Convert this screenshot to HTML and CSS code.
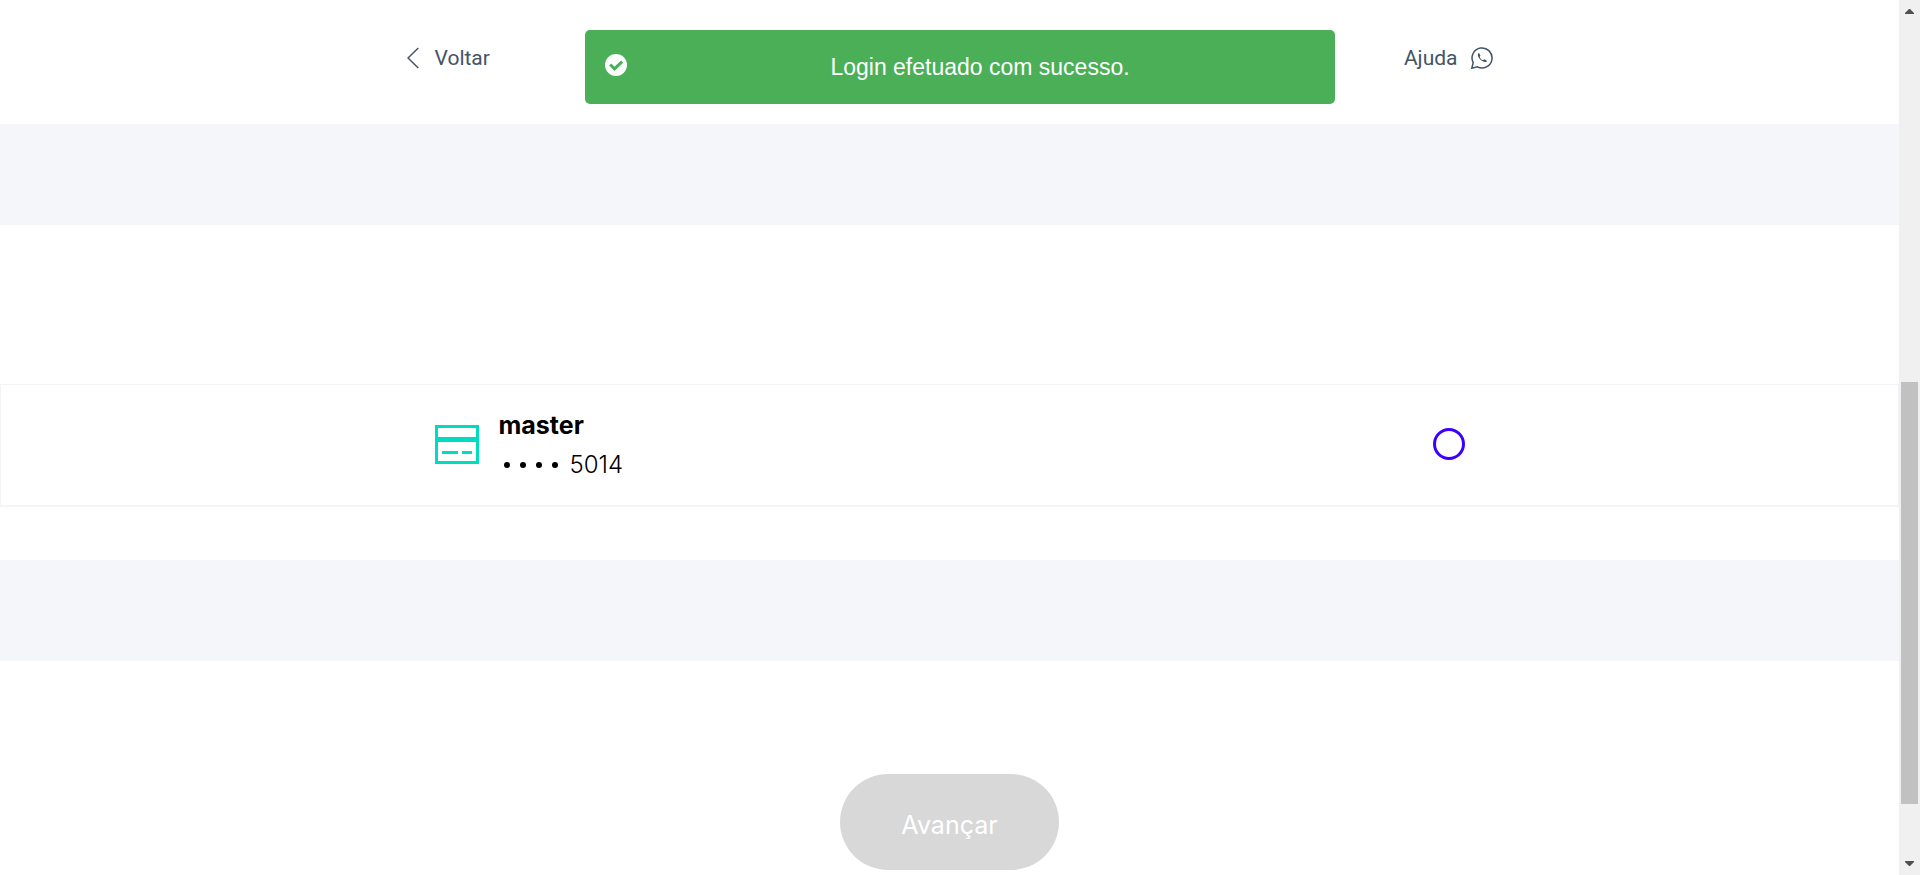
FILE: index.html
```html
<!DOCTYPE html>
<html lang="pt-BR">
<head>
<meta charset="utf-8">
<meta name="viewport" content="width=device-width, initial-scale=1">
<title>Pagamento</title>
<link rel="stylesheet" href="styles.css">
</head>
<body>
<div class="page">
  <header class="header">
    <div class="header-inner">
      <a class="nav-link nav-back" href="#">
        <svg class="icon-back" viewBox="0 0 12 22" aria-hidden="true"><path d="M11.3 1 1 11l10.3 10"/></svg>
        <span>Voltar</span>
      </a>
      <a class="nav-link nav-help" href="#">
        <span>Ajuda</span>
        <svg class="icon-help" viewBox="0 0 22 22" aria-hidden="true">
          <path class="bubble" d="M.8 21.200 2.200 15.600A10 10 0 1 1 6.400 19.800Z"/>
          <path class="phone" d="M7.300 6.300C6 8 7.400 10.600 9.300 12.500c2 2 4.500 3.200 6.300 2.200l.3-1-2.500-1.400-1.500.9C10.500 12.600 9.300 11.400 8.700 10l.7-1.400L8.200 6.300Z"/>
        </svg>
      </a>
    </div>
  </header>
  <main class="main">
    <div class="band"></div>
    <form class="form">
      <label class="card">
        <span class="card-inner">
          <svg class="icon-card" viewBox="0 0 44 39" aria-hidden="true">
            <path class="frame" d="M1.500 1.500h41v36h-41z"/>
            <path class="fill" d="M2 12h40v5H2zM7 26h16v3H7zM27 26h10v3H27z"/>
          </svg>
          <span class="card-text">
            <strong class="card-brand">master</strong>
            <span class="card-number"><span class="dots" aria-hidden="true"><i></i><i></i><i></i><i></i></span>5014</span>
          </span>
          <input class="radio" type="radio" name="card" value="5014">
        </span>
      </label>
      <div class="band"></div>
      <button class="submit" type="button" disabled>Avançar</button>
    </form>
  </main>
</div>
<div class="scrollbar" aria-hidden="true">
  <svg class="arrow" viewBox="0 0 9 5"><path d="M0 5V4L4 0h1l4 4v1z"/></svg>
  <div class="track"><div class="thumb"></div></div>
  <svg class="arrow" viewBox="0 0 9 5"><path d="M0 0v1l4 4h1l4-4V0z"/></svg>
</div>
<div class="toast" role="status">
  <svg class="icon-check" viewBox="0 0 22 22" aria-hidden="true"><circle cx="11" cy="11" r="11"/><path d="m5.200 10.500 4.300 4.300 7.600-7.200"/></svg>
  <span class="toast-text">Login efetuado com sucesso.</span>
</div>
</body>
</html>
```
FILE: styles.css
```css
* {
  box-sizing: border-box;
}

body {
  margin: 0;
  display: flex;
  height: 100vh;
  overflow: hidden;
  background: #fff;
  color: #000;
  font-family: Inter, "Liberation Sans", sans-serif;
  font-size: 24px;
}

.page {
  flex: 1;
  min-width: 0;
}

.header {
  padding: 40px 24px 48px;
}

.header-inner {
  display: flex;
  justify-content: space-between;
  max-width: 1086px;
  margin: 0 auto;
}

.nav-link {
  display: flex;
  align-items: center;
  color: #425466;
  font-family: Roboto, sans-serif;
  font-size: 21px;
  line-height: 36px;
  text-decoration: none;
}

.nav-back {
  gap: 16px;
}

.nav-help {
  gap: 13px;
}

.icon-back {
  width: 12px;
  height: 22px;
  fill: none;
  stroke: #425466;
  stroke-width: 1.5;
}

.icon-help {
  width: 22px;
  height: 22px;
}

.bubble {
  fill: none;
  stroke: #425466;
  stroke-width: 1.5;
}

.phone {
  fill: #425466;
}

.band {
  height: 101px;
  background: #f4f6fa;
}

.card {
  display: block;
  margin: 159px 0 53px;
  padding: 14px 24px 16px;
  border: 1px solid #f4f4f8;
  border-bottom-width: 2px;
  cursor: pointer;
}

.card-inner {
  display: flex;
  align-items: center;
  max-width: 1030px;
  margin: 0 auto;
}

.icon-card {
  width: 44px;
  height: 39px;
}

.frame {
  fill: none;
  stroke: #00dcc0;
  stroke-width: 3;
}

.fill {
  fill: #00dcc0;
}

.card-text {
  display: flex;
  flex-direction: column;
  flex: 1;
  padding: 6px 0 4px 20px;
  line-height: 40px;
}

.card-brand {
  font-size: 25px;
  font-weight: 700;
}

.card-number {
  display: flex;
  align-items: center;
  font-weight: 300;
}

.dots {
  display: flex;
  gap: 10px;
  padding: 0 12px 0 5px;
}

.dots i {
  width: 6px;
  height: 6px;
  border-radius: 50%;
  background: #000;
}

.radio {
  appearance: none;
  width: 32px;
  height: 32px;
  margin: 0;
  border: 3px solid #3b00ff;
  border-radius: 50%;
}

.submit {
  display: block;
  margin: 113px auto 0;
  padding: 31px 61px 25px;
  border: 0;
  border-radius: 48px;
  background: #d8d8d8;
  color: #fff;
  font-family: inherit;
  font-size: 25px;
  line-height: 40px;
}

.scrollbar {
  display: flex;
  flex-direction: column;
  align-items: center;
  width: 21px;
  padding: 9px 0;
  background: #f0f0f0;
}

.arrow {
  width: 9px;
  height: 5px;
  fill: #505050;
}

.track {
  display: flex;
  flex: 1;
  flex-direction: column;
  width: 17px;
}

.track::before {
  flex: 368;
  content: "";
}

.track::after {
  flex: 57;
  content: "";
}

.thumb {
  flex: 422;
  background: #c1c1c1;
}

.toast {
  position: fixed;
  top: 30px;
  left: 50%;
  display: flex;
  align-items: flex-start;
  gap: 18px;
  width: 750px;
  max-width: 90vw;
  padding: 19px 20px;
  border-radius: 5px;
  background: #4aaf57;
  color: #fff;
  font-family: "Liberation Sans", sans-serif;
  font-size: 23px;
  line-height: 36px;
  transform: translateX(-50%);
}

.icon-check {
  width: 22px;
  height: 22px;
  margin-top: 5px;
  fill: #fff;
}

.icon-check path {
  fill: none;
  stroke: #4aaf57;
  stroke-width: 3;
}

.toast-text {
  flex: 1;
  text-align: center;
}
```
